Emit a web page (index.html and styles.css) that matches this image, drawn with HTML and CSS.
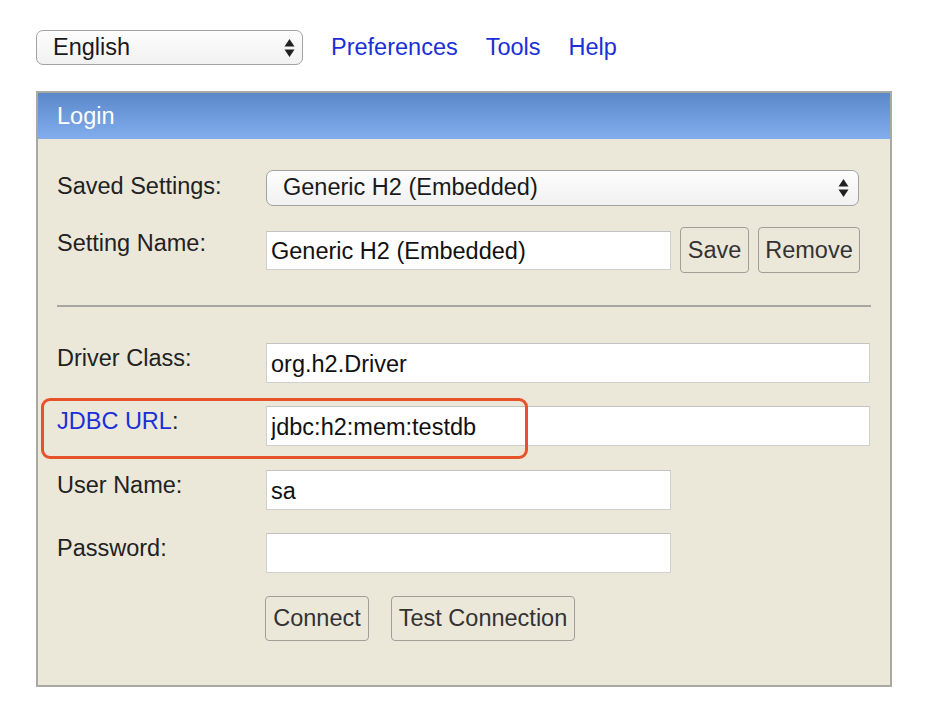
FILE: index.html
```html
<!DOCTYPE html>
<html>
<head>
<meta charset="utf-8">
<title>H2 Console Login</title>
<link rel="stylesheet" href="styles.css">
</head>
<body>
<div class="topbar">
  <div class="select lang">
    <span class="select-text">English</span>
    <svg class="arrows" width="11" height="22" viewBox="0 0 11 22"><path d="M5.5 2 L10.5 9.5 L0.5 9.5 Z M0.5 12.5 L10.5 12.5 L5.5 20 Z" fill="#222"/></svg>
  </div>
  <nav class="links">
    <a href="#">Preferences</a>
    <a href="#">Tools</a>
    <a href="#">Help</a>
  </nav>
</div>

<div class="panel">
  <div class="panel-head">Login</div>
  <div class="panel-body">
    <div class="row row-saved">
      <div class="label">Saved Settings:</div>
      <div class="select saved">
        <span class="select-text">Generic H2 (Embedded)</span>
        <svg class="arrows" width="11" height="22" viewBox="0 0 11 22"><path d="M5.5 2 L10.5 9.5 L0.5 9.5 Z M0.5 12.5 L10.5 12.5 L5.5 20 Z" fill="#222"/></svg>
      </div>
    </div>
    <div class="row row-name">
      <div class="label">Setting Name:</div>
      <input class="field short name-field" type="text" value="Generic H2 (Embedded)">
      <button class="btn btn-save">Save</button>
      <button class="btn btn-remove">Remove</button>
    </div>
    <hr class="sep">
    <div class="row row-driver">
      <div class="label">Driver Class:</div>
      <input class="field long" type="text" value="org.h2.Driver">
    </div>
    <div class="row row-url">
      <div class="label"><a href="#" class="url-link">JDBC URL</a>:</div>
      <input class="field long" type="text" value="jdbc:h2:mem:testdb">
      <div class="highlight"></div>
    </div>
    <div class="row row-user">
      <div class="label">User Name:</div>
      <input class="field short" type="text" value="sa">
    </div>
    <div class="row row-pass">
      <div class="label">Password:</div>
      <input class="field short" type="password" value="">
    </div>
    <div class="row row-actions">
      <button class="btn btn-connect">Connect</button>
      <button class="btn btn-test">Test Connection</button>
    </div>
  </div>
</div>
</body>
</html>
```

FILE: styles.css
```css
html, body {
  margin: 0;
  padding: 0;
  background: #ffffff;
}

body {
  font-family: "Liberation Sans", Arial, sans-serif;
  font-size: 23.5px;
  color: #222;
  padding: 30px 0 0 36px;
}

.topbar {
  display: flex;
  align-items: center;
  height: 35px;
}

.select {
  box-sizing: border-box;
  display: flex;
  align-items: center;
  justify-content: space-between;
  border: 1.5px solid #a2a2a2;
  border-radius: 7px;
  background: linear-gradient(#fdfdfd, #f1f1f1);
  padding: 0 7px 0 16px;
  color: #1a1a1a;
}

.select-text {
  line-height: 1;
}

.lang {
  width: 267px;
  height: 35px;
}

.links {
  display: flex;
  gap: 28px;
  margin-left: 28px;
}

.links a {
  color: #1b2fd8;
  text-decoration: none;
}

.panel {
  box-sizing: border-box;
  margin-top: 26px;
  width: 856px;
  border: 2px solid #aaa9a1;
  background: #ebe8da;
}

.panel-head {
  height: 46px;
  box-sizing: border-box;
  padding-left: 19px;
  display: flex;
  align-items: center;
  color: #ffffff;
  background: linear-gradient(#5b88c9, #82aeee);
}

.panel-body {
  padding: 31px 0 44px 19px;
}

.row {
  display: flex;
  align-items: flex-start;
  position: relative;
}

.label {
  width: 209px;
  flex: none;
  line-height: 27px;
  padding-top: 2px;
  color: #222;
}

.row-saved .label {
  padding-top: 3px;
}

.saved {
  width: 593px;
  height: 36px;
  padding-right: 9px;
}

.row-name {
  margin-top: 21px;
  height: 46px;
}

.row-name .label {
  padding-top: 3px;
}

.field {
  box-sizing: border-box;
  height: 40px;
  border: 1px solid #cfcfcf;
  border-top-color: #c2c2c2;
  background: #ffffff;
  font-family: "Liberation Sans", Arial, sans-serif;
  font-size: 23.5px;
  color: #111;
  padding: 2px 4px 0;
  margin: 0;
  outline: none;
}

.short {
  width: 405px;
}

.long {
  width: 604px;
}

.name-field {
  margin-top: 4px;
  height: 39px;
}

.btn {
  box-sizing: border-box;
  height: 46px;
  border: 1.5px solid #a09f96;
  border-radius: 4px;
  background: #ebe8da;
  font-family: "Liberation Sans", Arial, sans-serif;
  font-size: 23.5px;
  color: #333;
  padding: 0;
  margin: 0;
}

.btn-save {
  width: 69px;
  margin-left: 9px;
}

.btn-remove {
  width: 102px;
  margin-left: 9px;
}

.sep {
  margin: 32px 0 0 0;
  width: 814px;
  height: 0;
  border: none;
  border-top: 2px solid #a6a6a2;
}

.row-driver {
  margin-top: 36px;
}

.row-url {
  margin-top: 23px;
}

.url-link {
  color: #1b2fd8;
  text-decoration: none;
}

.highlight {
  position: absolute;
  left: -16px;
  top: -8px;
  width: 487px;
  height: 61px;
  box-sizing: border-box;
  border: 3.5px solid #e6532b;
  border-radius: 9px;
  pointer-events: none;
}

.row-user {
  margin-top: 24px;
}

.row-pass {
  margin-top: 23px;
}

.row-actions {
  margin-top: 23px;
  padding-left: 208px;
  gap: 22px;
}

.btn-connect {
  width: 104px;
  height: 45px;
}

.btn-test {
  width: 184px;
  height: 45px;
}
```
